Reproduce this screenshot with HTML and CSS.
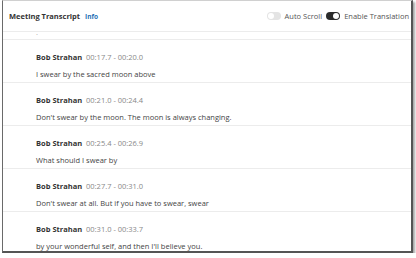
FILE: index.html
```html
<!DOCTYPE html>
<html lang="en">
<head>
    <meta charset="UTF-8" />
    <title>Meeting Transcript</title>
    <link rel="stylesheet" href="styles.css">
</head>
<body>
    <div class="panel">
        <!-- header -->
        <div class="header">
            <div class="title">Meeting Transcript <span class="info">Info</span></div>
            <div class="controls">
                <span class="toggle off"><span class="knob"></span></span>
                <span class="label">Auto Scroll</span>
                <span class="toggle on"><span class="knob"></span></span>
                <span class="label">Enable Translation</span>
            </div>
        </div>

        <!-- transcript list -->
        <div class="list">
            <div class="entry partial">
                <div class="text">.</div>
            </div>
            <div class="entry">
                <div class="meta"><span class="speaker">Bob Strahan</span> <span class="time">00:17.7 - 00:20.0</span></div>
                <div class="text">I swear by the sacred moon above</div>
            </div>
            <div class="entry">
                <div class="meta"><span class="speaker">Bob Strahan</span> <span class="time">00:21.0 - 00:24.4</span></div>
                <div class="text">Don't swear by the moon. The moon is always changing.</div>
            </div>
            <div class="entry">
                <div class="meta"><span class="speaker">Bob Strahan</span> <span class="time">00:25.4 - 00:26.9</span></div>
                <div class="text">What should I swear by</div>
            </div>
            <div class="entry">
                <div class="meta"><span class="speaker">Bob Strahan</span> <span class="time">00:27.7 - 00:31.0</span></div>
                <div class="text">Don't swear at all. But if you have to swear, swear</div>
            </div>
            <div class="entry">
                <div class="meta"><span class="speaker">Bob Strahan</span> <span class="time">00:31.0 - 00:33.7</span></div>
                <div class="text">by your wonderful self, and then I'll believe you.</div>
            </div>
        </div>
    </div>
</body>
</html>
```

FILE: styles.css
```css
/* --- Page --- */
body {
    margin: 0;
    background: #fff;
    font-family: "Open Sans", "Noto Sans", sans-serif;
    color: #333;
}

.panel {
    width: 408px;
    height: 250px;
    margin: 0 0 0 2px;
    border: 1px solid #6a6a6a;
    border-top-color: #d0d0d0;
    border-right: 2px solid #555;
    border-bottom: 2px solid #555;
    box-shadow: 2px 2px 2px rgba(0,0,0,0.35);
    overflow: hidden;
    background: #fff;
}

/* --- Header --- */
.header {
    display: flex;
    align-items: center;
    justify-content: space-between;
    height: 30px;
    padding-left: 6px;
    border-bottom: 1px solid #ececec;
}

.title {
    font-size: 7.5px;
    font-weight: bold;
    color: #333;
}

.info {
    margin-left: 3px;
    font-size: 6.5px;
    color: #1f6fb5;
}

.controls {
    display: flex;
    align-items: center;
    white-space: nowrap;
    margin-right: -2px;
    font-size: 7.5px;
    color: #555;
}

.label {
    margin-right: 4px;
}

.toggle {
    position: relative;
    width: 14px;
    height: 8px;
    border-radius: 4px;
    margin-right: 4px;
}

.toggle .knob {
    position: absolute;
    top: 1px;
    width: 6px;
    height: 6px;
    border-radius: 50%;
    background: #fff;
}

.toggle.off {
    background: #e4e4e4;
}

.toggle.off .knob {
    left: 1px;
}

.toggle.on {
    background: #2b2b2b;
}

.toggle.on .knob {
    right: 1px;
}

/* --- Transcript --- */
.entry {
    height: 42px;
    padding-left: 33px;
    border-bottom: 1px solid #ececec;
    font-size: 7.5px;
}

.entry.partial {
    height: 12px;
}

.entry.partial .text {
    margin-top: -5px;
    color: #aaa;
}

.meta {
    padding-top: 12px;
    line-height: 10px;
}

.speaker {
    font-weight: bold;
    color: #333;
    margin-right: 2px;
}

.time {
    color: #888;
}

.text {
    margin-top: 7px;
    line-height: 10px;
    color: #444;
}
```
